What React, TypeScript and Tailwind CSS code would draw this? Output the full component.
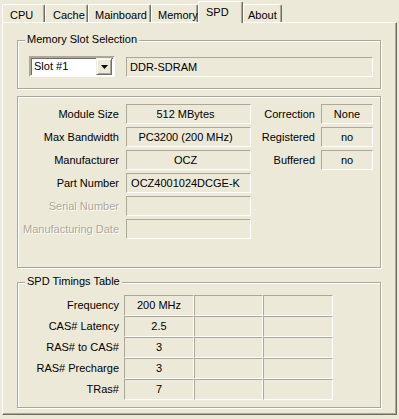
const tabs = [
  { label: "CPU", cls: "w-[43px] pl-[7px]" },
  { label: "Cache", cls: "w-[43px] pl-[7px]" },
  { label: "Mainboard", cls: "w-[63px] pl-[6px]" },
  { label: "Memory", cls: "w-[47px] pl-[6px]" },
  { label: "SPD", cls: "w-[45px] pl-[7px]", active: true },
  { label: "About", cls: "w-[39px] pl-[4px]" },
];

const moduleRows = [
  { label: "Module Size", value: "512 MBytes" },
  { label: "Max Bandwidth", value: "PC3200 (200 MHz)" },
  { label: "Manufacturer", value: "OCZ" },
  { label: "Part Number", value: "OCZ4001024DCGE-K" },
  { label: "Serial Number", value: "", disabled: true },
  { label: "Manufacturing Date", value: "", disabled: true },
];

const flagRows = [
  { label: "Correction", value: "None" },
  { label: "Registered", value: "no" },
  { label: "Buffered", value: "no" },
];

const timings = [
  { label: "Frequency", value: "200 MHz" },
  { label: "CAS# Latency", value: "2.5" },
  { label: "RAS# to CAS#", value: "3" },
  { label: "RAS# Precharge", value: "3" },
  { label: "TRas#", value: "7" },
];

function Tab({ label, cls, active }: { label: string; cls: string; active?: boolean }) {
  if (active) {
    return (
      <div
        className={`${cls} relative z-10 h-[22px] mb-[-1px] pt-[4px] bg-[#ECE9D8] border-t border-l border-r border-t-white border-l-white border-r-[#716F64] rounded-t-[2px] shadow-[inset_-1px_0_0_#ACA899]`}
      >
        {label}
      </div>
    );
  }
  return (
    <div
      className={`${cls} h-[18px] pt-[4px] border-t border-l border-r border-t-white border-l-white border-r-[#716F64] rounded-t-[2px] shadow-[inset_-1px_0_0_#ACA899]`}
    >
      {label}
    </div>
  );
}

function GroupBox({
  title,
  className,
  children,
}: {
  title?: string;
  className: string;
  children: React.ReactNode;
}) {
  return (
    <div
      className={`relative w-[364px] border border-[#ACA899] shadow-[1px_1px_0_#fff,inset_1px_1px_0_#fff] ${className}`}
    >
      {title && (
        <span className="absolute top-[-8px] left-[7px] px-[2px] bg-[#ECE9D8]">{title}</span>
      )}
      {children}
    </div>
  );
}

function Field({ value, className }: { value: string; className: string }) {
  return (
    <div
      className={`flex items-center justify-center border border-t-[#ACA899] border-l-[#ACA899] border-b-white border-r-white whitespace-nowrap ${className}`}
    >
      {value}
    </div>
  );
}

export default function App() {
  return (
    <div className="w-[399px] h-[419px] bg-[#ECE9D8] overflow-hidden text-[11px] leading-[13px] text-black font-['Liberation_Sans',Arial,sans-serif]">
      <div className="flex items-end h-[22px] pl-[2px]">
        {tabs.map((t) => (
          <Tab key={t.label} label={t.label} cls={t.cls} active={t.active} />
        ))}
      </div>

      <div className="ml-[2px] w-[395px] h-[393px] border border-t-white border-l-white border-r-[#716F64] border-b-[#716F64] shadow-[inset_-1px_-1px_0_#ACA899] pl-[14px]">
        <GroupBox title="Memory Slot Selection" className="mt-[17px] h-[49px] pl-[11px] pt-[15px]">
          <div className="flex items-start gap-[11px]">
            <div className="flex items-center w-[86px] h-[21px] bg-white border-2 border-t-[#ACA899] border-l-[#ACA899] border-b-white border-r-white shadow-[inset_1px_1px_0_#716F64]">
              <span className="flex-1 pl-[3px]">Slot #1</span>
              <div className="flex items-center justify-center w-[16px] h-[17px] mr-[1px] bg-[#ECE9D8] border border-t-[#F1EFE2] border-l-[#F1EFE2] border-b-[#716F64] border-r-[#716F64] shadow-[inset_1px_1px_0_#fff,inset_-1px_-1px_0_#ACA899]">
                <svg width="7" height="4" viewBox="0 0 7 4">
                  <polygon points="0,0 7,0 3.5,4" fill="#000" />
                </svg>
              </div>
            </div>
            <div className="flex items-center w-[247px] h-[20px] mt-[1px] pl-[3px] border border-t-[#ACA899] border-l-[#ACA899] border-b-white border-r-white">
              DDR-SDRAM
            </div>
          </div>
        </GroupBox>

        <GroupBox className="mt-[7px] h-[172px] pt-[7px]">
          <div className="flex">
            <div className="flex flex-col gap-[3px]">
              {moduleRows.map((r) => (
                <div key={r.label} className="flex items-center h-[20px] gap-[7px]">
                  <span
                    className={`w-[101px] text-right whitespace-nowrap ${
                      r.disabled ? "text-[#ACA899] [text-shadow:1px_1px_0_#fff]" : ""
                    }`}
                  >
                    {r.label}
                  </span>
                  <Field value={r.value} className="w-[125px] h-[20px] pr-[6px]" />
                </div>
              ))}
            </div>
            <div className="flex flex-col gap-[3px]">
              {flagRows.map((r) => (
                <div key={r.label} className="flex items-center h-[20px] gap-[6px]">
                  <span className="w-[64px] text-right">{r.label}</span>
                  <Field value={r.value} className="w-[52px] h-[20px]" />
                </div>
              ))}
            </div>
          </div>
        </GroupBox>

        <GroupBox title="SPD Timings Table" className="mt-[14px] h-[126px] pt-[12px]">
          <div className="flex flex-col">
            {timings.map((r) => (
              <div key={r.label} className="flex items-center gap-[5px]">
                <span className="w-[101px] text-right whitespace-nowrap">{r.label}</span>
                <div className="flex">
                  <Field value={r.value} className="w-[70px] h-[21px]" />
                  <Field value="" className="w-[69px] h-[21px]" />
                  <Field value="" className="w-[70px] h-[21px]" />
                </div>
              </div>
            ))}
          </div>
        </GroupBox>
      </div>
    </div>
  );
}
